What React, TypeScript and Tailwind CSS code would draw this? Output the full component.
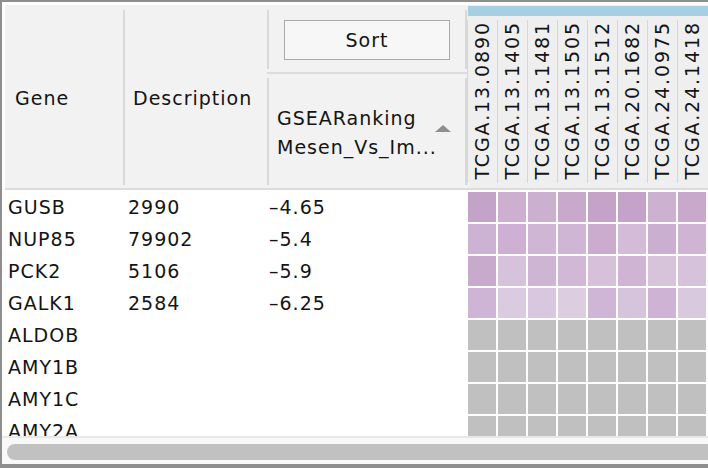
import React from "react";

const font = { fontFamily: '"DejaVu Sans", "Liberation Sans", sans-serif' };

const rows: { gene: string; desc: string; val: string; colors: string[] }[] = [
  { gene: "GUSB", desc: "2990", val: "\u20134.65", colors: ["#c4a3c9", "#cdb0d0", "#cbb0cf", "#c8a9cb", "#c5a3c9", "#c5a2c9", "#cdb1d1", "#c8a8cb"] },
  { gene: "NUP85", desc: "79902", val: "\u20135.4", colors: ["#cdb3d3", "#cdb0d3", "#cfb6d5", "#cfb6d5", "#cbaccf", "#d4bcd8", "#cbafd0", "#cfb4d4"] },
  { gene: "PCK2", desc: "5106", val: "\u20135.9", colors: ["#c8aacd", "#d6c2da", "#cfb5d4", "#d0b8d6", "#d6c0da", "#cfb4d4", "#d7c4db", "#d6c2da"] },
  { gene: "GALK1", desc: "2584", val: "\u20136.25", colors: ["#ceb4d5", "#dacbe0", "#d8c7de", "#dccde1", "#d0b6d6", "#d6c4dc", "#ceb3d5", "#d9c9df"] },
  { gene: "ALDOB", desc: "", val: "", colors: [] },
  { gene: "AMY1B", desc: "", val: "", colors: [] },
  { gene: "AMY1C", desc: "", val: "", colors: [] },
  { gene: "AMY2A", desc: "", val: "", colors: [] },
];

const samples = [
  "TCGA.13.0890",
  "TCGA.13.1405",
  "TCGA.13.1481",
  "TCGA.13.1505",
  "TCGA.13.1512",
  "TCGA.20.1682",
  "TCGA.24.0975",
  "TCGA.24.1418",
];

export default function App() {
  return (
    <div
      className="w-[708px] h-[468px] overflow-hidden bg-white flex flex-col border-l-2 border-t-2 border-b-4 border-[#8e8e8e] text-[19px] tracking-[1px] text-[#141414]"
      style={font}
    >
      <div className="flex-1 flex flex-col overflow-hidden pt-[3px] pl-[3px]">
        {/* Header */}
        <div className="h-[185px] shrink-0 flex bg-[#f2f2f2] border-b-2 border-[#dcdcdc]">
          <div className="w-[118px] shrink-0 flex items-center pl-[10px] pt-[4px]">Gene</div>
          <div className="w-[2px] shrink-0 mt-[5px] mb-[3px] bg-[#d9d9d9]" />
          <div className="w-[142px] shrink-0 flex items-center pl-[8px] pt-[4px]">Description</div>
          <div className="w-[200px] shrink-0 flex flex-col">
            <div className="h-[69px] shrink-0 flex border-b-2 border-[#dcdcdc]">
              <div className="w-[2px] shrink-0 mt-[5px] mb-[3px] bg-[#d9d9d9]" />
              <div className="flex-1 flex items-start pt-[15px] pl-[15px]">
                <div className="w-[166px] h-[40px] border border-[#a8a8a8] bg-[#f7f7f7] flex items-center justify-center">
                  Sort
                </div>
              </div>
              <div className="w-[2px] shrink-0 mt-[5px] mb-[3px] bg-[#d9d9d9]" />
            </div>
            <div className="flex-1 flex">
              <div className="w-[2px] shrink-0 mt-[4px] mb-[3px] bg-[#d9d9d9]" />
              <div className="flex-1 flex items-center pl-[8px] relative">
                <div className="leading-[29px] pt-[3px]">
                  <div>GSEARanking</div>
                  <div>Mesen_Vs_Im...</div>
                </div>
                <svg className="absolute left-[166px] top-[51px]" width="16" height="8" viewBox="0 0 16 8">
                  <polygon points="8,0 16,7 0,7" fill="#8f8f8f" />
                </svg>
              </div>
              <div className="w-[2px] shrink-0 mt-[4px] mb-[3px] bg-[#d9d9d9]" />
            </div>
          </div>
          <div className="flex-1 flex flex-col bg-[#efefef]">
            <div className="h-[10px] shrink-0 mt-[1px] ml-[1px] bg-[#a6cfe3]" />
            <div className="flex-1 flex">
              {samples.map((s) => (
                <div key={s} className="w-[30px] shrink-0 flex">
                  <div className="w-px shrink-0 mt-[4px] mb-[5px] bg-[#d6d6d6]" />
                  <div className="flex-1 flex flex-col justify-end items-center pb-[8px]">
                    <div className="[writing-mode:vertical-rl] rotate-180 leading-[29px] tracking-[1.9px] whitespace-nowrap">{s}</div>
                  </div>
                </div>
              ))}
            </div>
          </div>
        </div>
        {/* Body */}
        <div className="flex-1 overflow-hidden flex flex-col pt-px">
          {rows.map((r) => (
            <div key={r.gene} className="h-[32px] shrink-0 flex">
              <div className="w-[120px] shrink-0 flex items-center pl-[3px]">{r.gene}</div>
              <div className="w-[142px] shrink-0 flex items-center pl-[3px]">{r.desc}</div>
              <div className="w-[200px] shrink-0 flex items-center pl-[2px]">{r.val}</div>
              <div className="flex shrink-0">
                {Array.from({ length: 8 }).map((_, i) => (
                  <div key={i} className="w-[30px] h-[32px] p-px shrink-0">
                    <div
                      className="w-[28px] h-[30px]"
                      style={{ backgroundColor: r.colors[i] ?? "#c0c0c0" }}
                    />
                  </div>
                ))}
              </div>
            </div>
          ))}
        </div>
      </div>
      {/* Horizontal scrollbar */}
      <div className="h-[28px] shrink-0 border-t-2 border-[#e8e8e8] bg-[#f8f8f8] flex flex-col pl-[5px] pt-[6px]">
        <div className="h-[16px] w-[720px] rounded-full bg-[#c1c1c1]" />
      </div>
    </div>
  );
}
